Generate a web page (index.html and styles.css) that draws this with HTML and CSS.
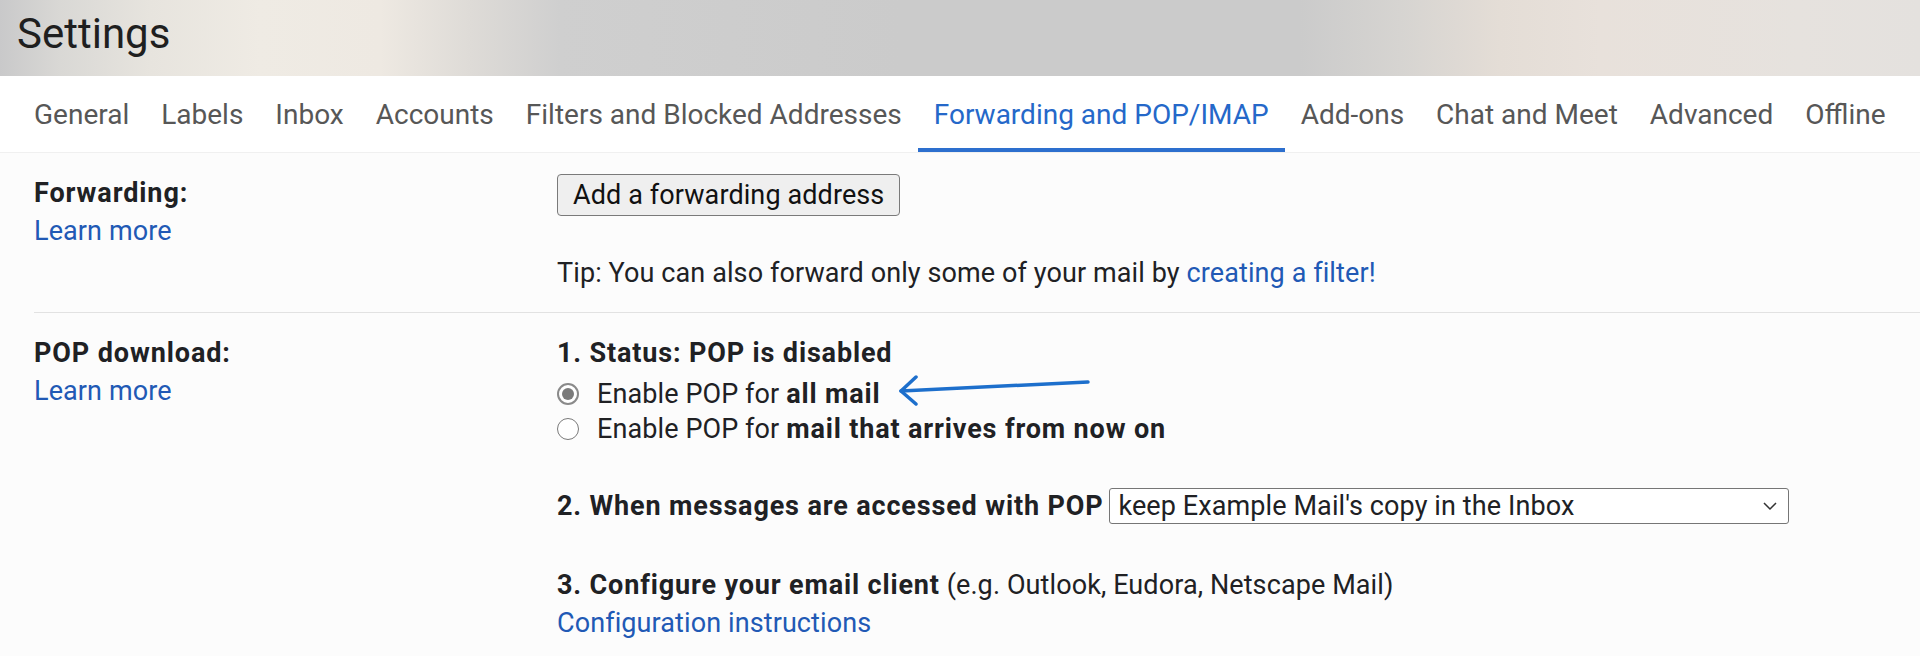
FILE: index.html
```html
<!DOCTYPE html>
<html lang="en">
<head>
<meta charset="utf-8">
<title>Settings</title>
<link rel="stylesheet" href="styles.css">
</head>
<body>
<header class="header">
  <h1 class="title">Settings</h1>
</header>
<nav class="tabs">
  <a class="tab">General</a>
  <a class="tab">Labels</a>
  <a class="tab">Inbox</a>
  <a class="tab">Accounts</a>
  <a class="tab">Filters and Blocked Addresses</a>
  <a class="tab tab-active">Forwarding and POP/IMAP</a>
  <a class="tab">Add-ons</a>
  <a class="tab">Chat and Meet</a>
  <a class="tab">Advanced</a>
  <a class="tab">Offline</a>
</nav>
<main class="content">
  <section class="row row-first">
    <div class="label">
      <div class="label-title">Forwarding:</div>
      <a class="link">Learn more</a>
    </div>
    <div class="value">
      <button class="btn">Add a forwarding address</button>
      <p class="tip">Tip: You can also forward only some of your mail by <a class="link">creating a filter!</a></p>
    </div>
  </section>
  <section class="row row-second">
    <div class="label">
      <div class="label-title">POP download:</div>
      <a class="link">Learn more</a>
    </div>
    <div class="value">
      <div class="line strong">1. Status: POP is disabled</div>
      <div class="radio-row radio-row-first">
        <span class="radio radio-checked"></span>
        <span>Enable POP for <b>all mail</b></span>
        <svg class="arrow" width="196" height="36" viewBox="0 0 196 36">
          <path d="M4 21 L191 12" stroke="#1d6fcc" stroke-width="3.5" fill="none" stroke-linecap="round"/>
          <path d="M19 7 L4 21 L19 34" stroke="#1d6fcc" stroke-width="3.5" fill="none" stroke-linecap="round" stroke-linejoin="round"/>
        </svg>
      </div>
      <div class="radio-row radio-row-second">
        <span class="radio"></span>
        <span>Enable POP for <b>mail that arrives from now on</b></span>
      </div>
      <div class="select-row">
        <b>2. When messages are accessed with POP</b>
        <div class="select">
          <span>keep Example Mail's copy in the Inbox</span>
          <svg class="chev" width="16" height="10" viewBox="0 0 16 10">
            <path d="M2 2 L8 8 L14 2" stroke="#333" stroke-width="1.5" fill="none"/>
          </svg>
        </div>
      </div>
      <div class="line config"><b>3. Configure your email client</b> (e.g. Outlook, Eudora, Netscape Mail)</div>
      <a class="link">Configuration instructions</a>
    </div>
  </section>
</main>
</body>
</html>
```
FILE: styles.css
```css
* { box-sizing: border-box; }
html, body { margin: 0; padding: 0; }
body {
  font-family: Roboto, "Liberation Sans", Arial, sans-serif;
  color: #202124;
  background: #fcfcfc;
  width: 1920px;
  height: 656px;
  overflow: hidden;
}
.header {
  height: 76px;
  padding: 12px 0 0 17px;
  background: linear-gradient(90deg, #c9c9ca 0px, #d9d8d5 60px, #e7e4de 150px, #efebe4 260px, #eee9e2 380px, #dedbd7 470px, #cfcfcf 560px, #cbcbcb 900px, #cbcbcb 1300px, #d6d4d1 1400px, #e4ddd6 1500px, #e8e1db 1600px, #e6e2de 1800px, #e4e1de 1920px);
}
.title {
  margin: 0;
  font-size: 42px;
  font-weight: 400;
  line-height: 44px;
  color: #1f1f1f;
}
.tabs {
  display: flex;
  height: 77px;
  padding-left: 18px;
  background: #fff;
  border-bottom: 1px solid #f0f0f0;
}
.tab {
  display: flex;
  align-items: center;
  padding: 4px 16px 0 16px;
  border-bottom: 4px solid transparent;
  font-size: 28px;
  color: #575757;
  white-space: nowrap;
}
.tab-active {
  color: #2568c9;
  border-bottom-color: #2d6fce;
}
.content {
  background: #fcfcfc;
}
.row {
  display: grid;
  grid-template-columns: 523px 1fr;
  margin-left: 34px;
  font-size: 27px;
  line-height: 38px;
  letter-spacing: 0.1px;
}
.row b, .strong {
  font-weight: 700;
  letter-spacing: 0.85px;
}
.row-first {
  padding: 21px 0 20px 0;
}
.row-second {
  border-top: 1px solid #e2e2e2;
  padding-top: 21px;
}
.label-title {
  font-weight: 700;
  font-size: 27px;
  letter-spacing: 0.9px;
  color: #202124;
}
.link {
  color: #2159b5;
  text-decoration: none;
  display: inline-block;
}
.value { display: flex; flex-direction: column; align-items: flex-start; }
.btn {
  margin-top: 0;
  height: 42px;
  padding: 0 15px;
  font-family: Roboto, "Liberation Sans", Arial, sans-serif;
  font-size: 27px;
  letter-spacing: 0.1px;
  color: #111;
  background: #efefef;
  border: 1px solid #7a7a7a;
  border-radius: 4px;
}
.tip {
  margin: 38px 0 0 0;
}
.radio-row {
  display: flex;
  align-items: center;
  height: 38px;
}
.radio-row-first { margin-top: 3px; }
.radio-row-second { margin-top: -3px; }
.radio {
  width: 22px;
  height: 22px;
  border-radius: 50%;
  border: 1.5px solid #7a7a7a;
  background: #fff;
  margin-right: 18px;
  display: flex;
  align-items: center;
  justify-content: center;
  flex: none;
}
.radio-checked {
  border: 2px solid #8a8a8a;
}
.radio-checked::before {
  content: "";
  width: 12px;
  height: 12px;
  border-radius: 50%;
  background: #7b7b7b;
}
.arrow {
  margin-left: 16px;
  margin-top: -12px;
}
.select-row {
  display: flex;
  align-items: center;
  margin-top: 40px;
  height: 36px;
}
.select {
  display: flex;
  align-items: center;
  justify-content: space-between;
  width: 680px;
  height: 36px;
  margin-left: 6px;
  padding: 0 10px 0 8px;
  border: 1px solid #767676;
  border-radius: 3px;
  background: #fff;
  font-size: 27px;
  letter-spacing: 0.1px;
}
.config {
  margin-top: 42px;
}
```
